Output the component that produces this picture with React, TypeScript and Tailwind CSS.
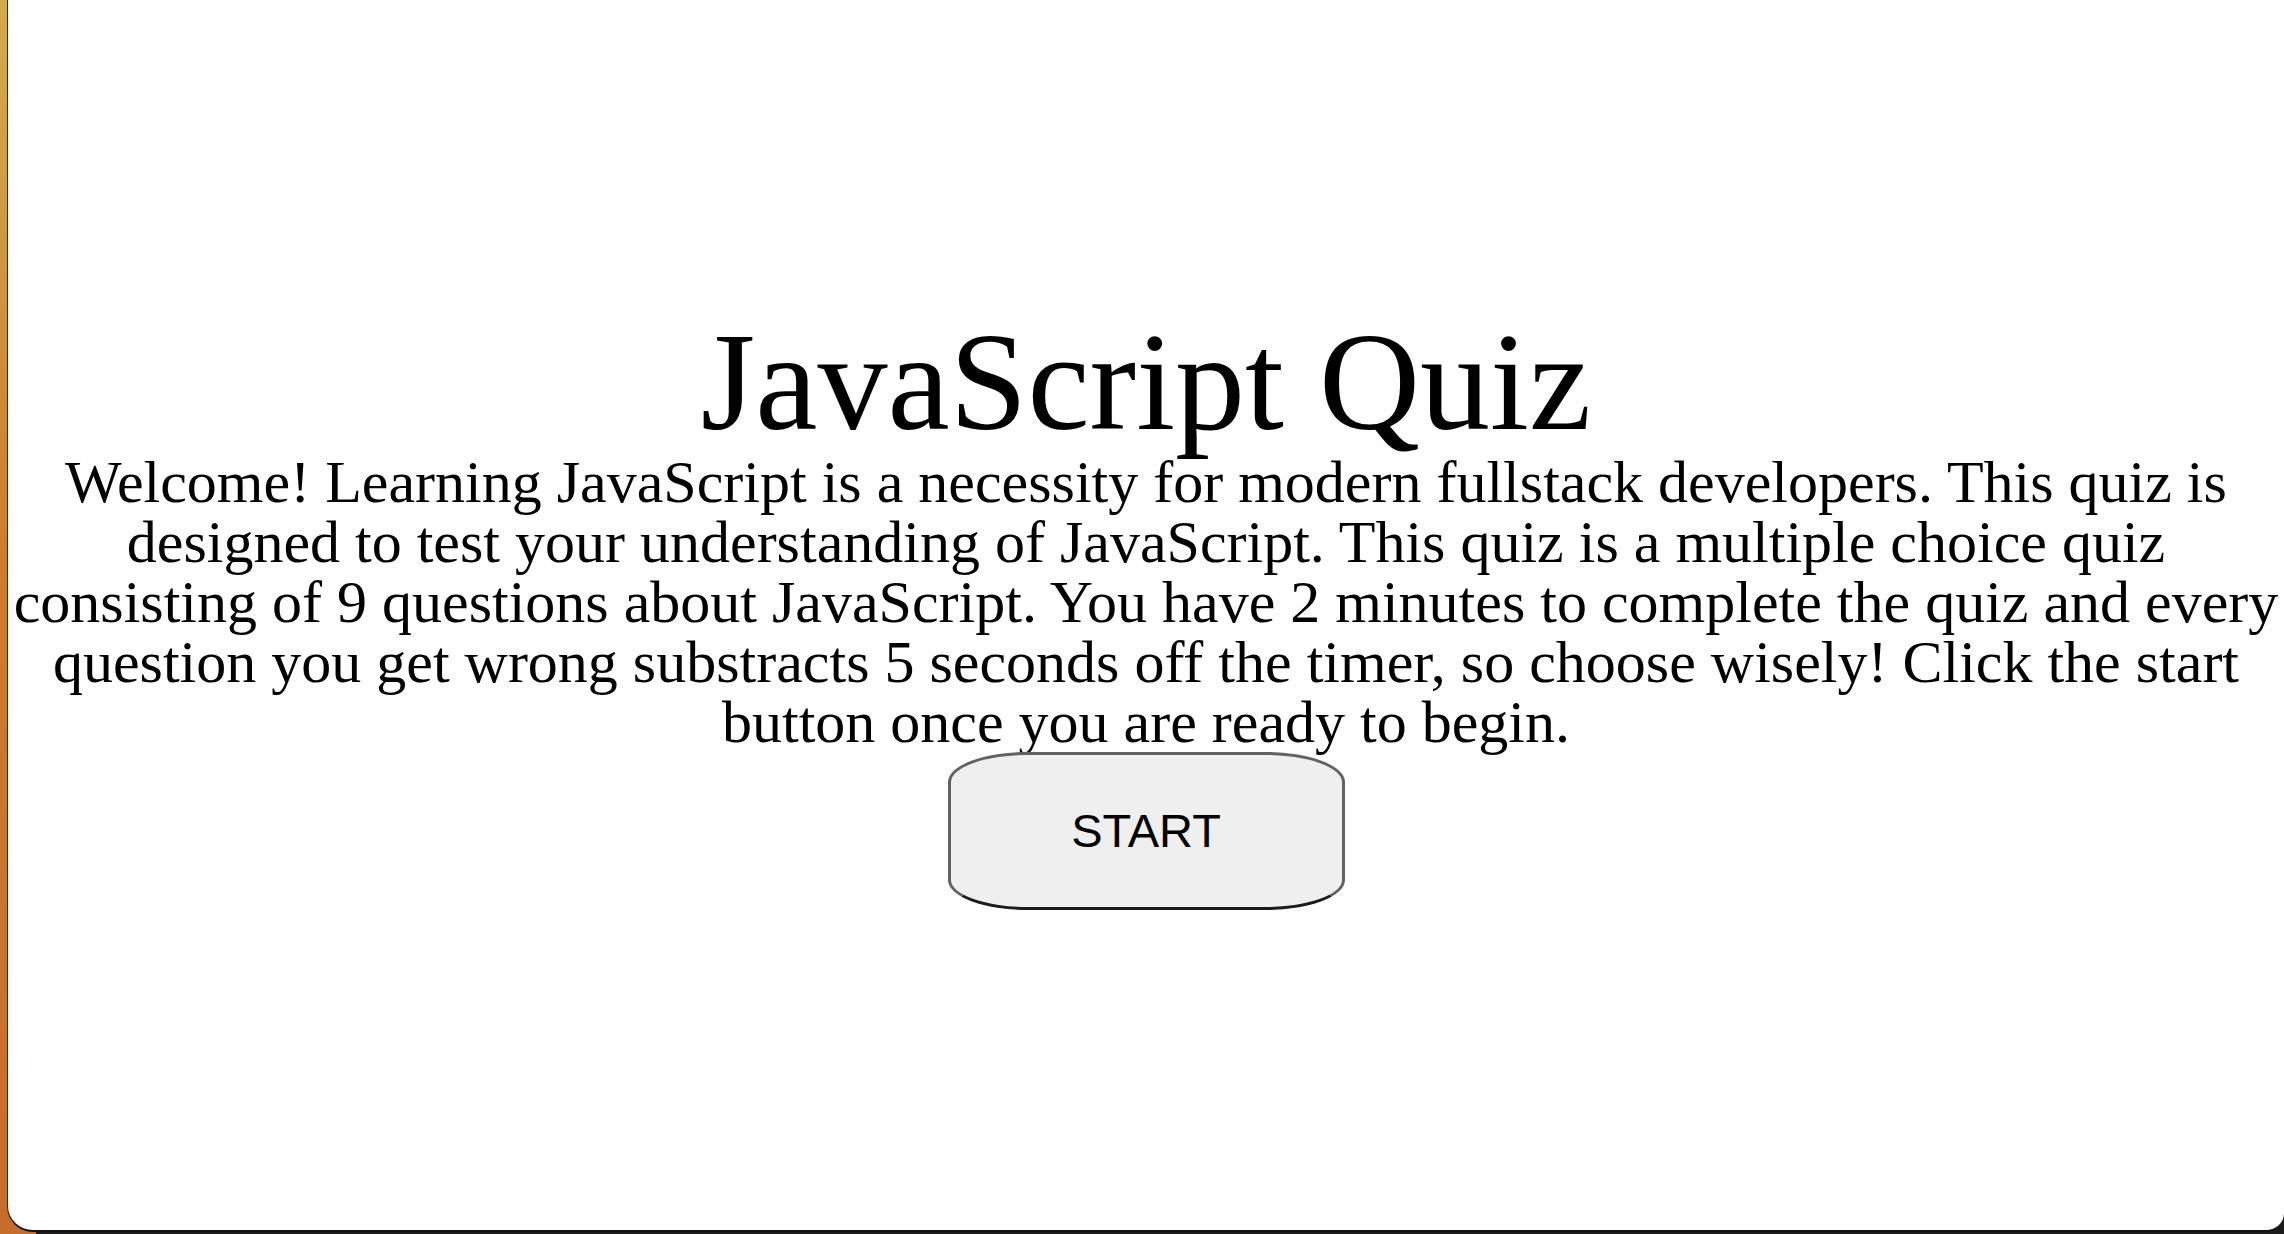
export default function App() {
  return (
    <div className="flex h-screen w-full overflow-hidden bg-[linear-gradient(to_right,transparent_36px,#1b1b1b_36px),linear-gradient(to_bottom,#d4aa4e,#cc7d2c_45%,#c56d2a)] pl-[7px]">
      <div className="flex h-[1232px] flex-1 flex-col items-center rounded-bl-[26px] rounded-br-[18px] border-b-2 border-l border-b-[#141414] border-l-[#2a1c08] bg-[#fefefe] font-['Liberation_Serif',serif] text-black">
        <h1 className="mt-[312px] text-[140px] leading-none">JavaScript Quiz</h1>
        <p className="w-full px-1 text-center text-[60px] leading-[60px]">
          Welcome! Learning JavaScript is a necessity for modern fullstack developers. This quiz is designed to test
          your understanding of JavaScript. This quiz is a multiple choice quiz consisting of 9 questions about
          JavaScript. You have 2 minutes to complete the quiz and every question you get wrong substracts 5 seconds
          off the timer, so choose wisely! Click the start button once you are ready to begin.
        </p>
        <button className="h-[158px] w-[397px] rounded-[80px/30px] border-[3px] border-[#626262] border-b-[#1c1c1c] bg-[#efefef] font-['Liberation_Sans',Arial,sans-serif] text-[47px]">
          START
        </button>
      </div>
    </div>
  );
}
